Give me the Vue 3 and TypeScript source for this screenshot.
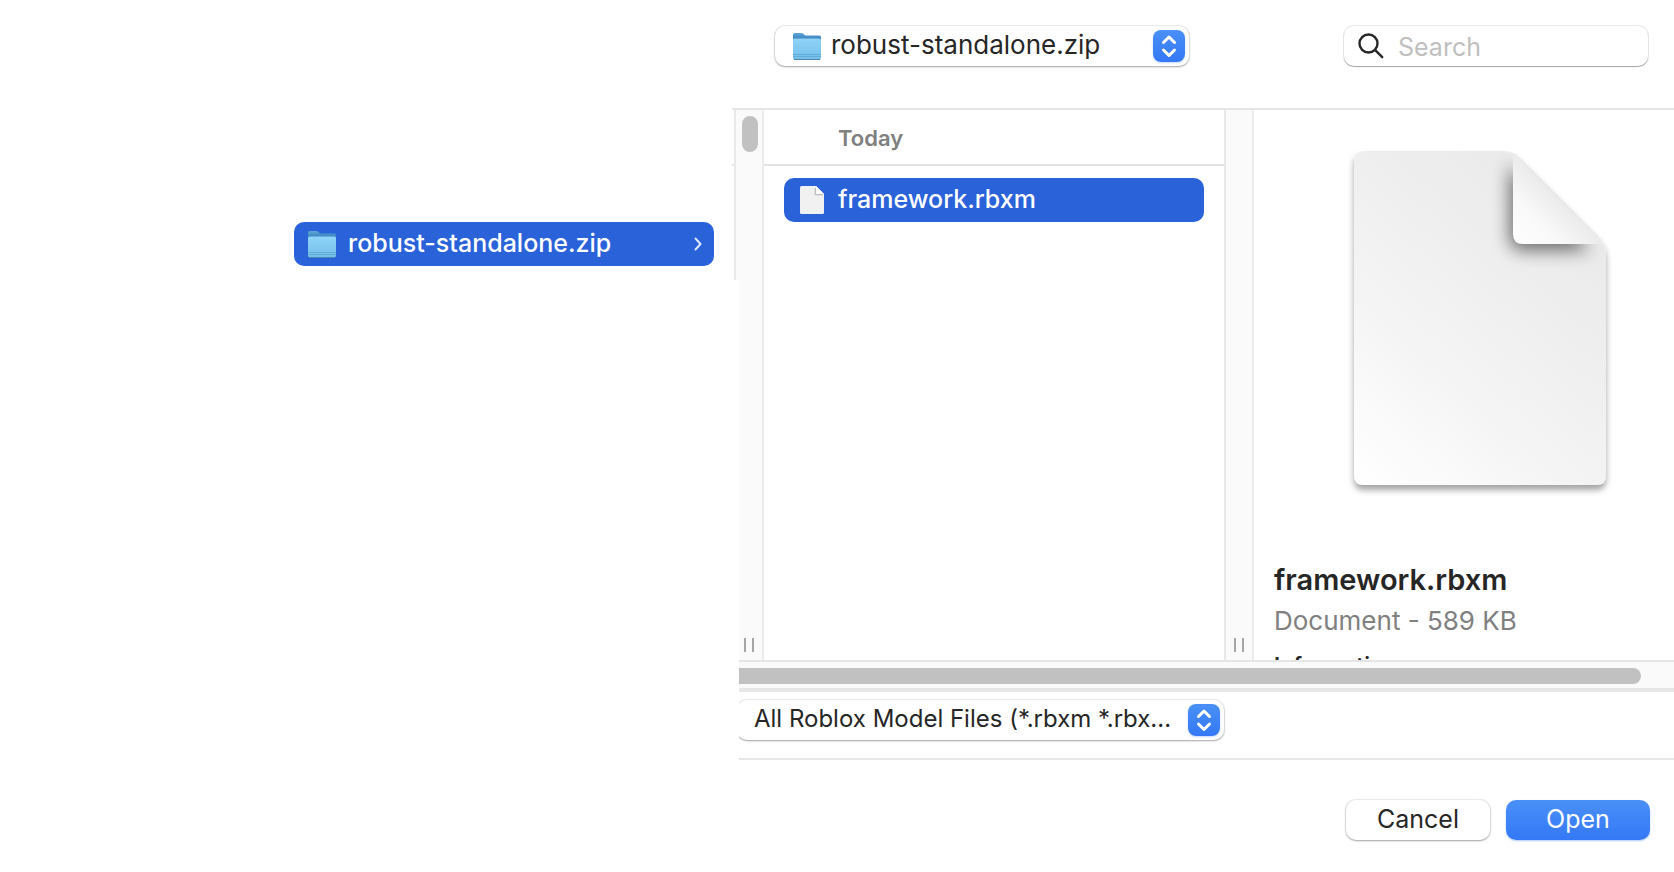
<script setup lang="ts">
import { ref } from 'vue'

interface FileEntry {
  name: string
  kind: string
  size: string
}

const folder = ref('robust-standalone.zip')
const query = ref('')
const filter = ref('All Roblox Model Files (*.rbxm *.rbx...')
const files: FileEntry[] = [{ name: 'framework.rbxm', kind: 'Document', size: '589 KB' }]
const selected = ref<FileEntry>(files[0])
</script>

<template>
  <main class="dialog">
    <svg class="defs" aria-hidden="true">
      <defs>
        <linearGradient id="folder-back" x1="0" y1="0" x2="0" y2="1">
          <stop offset="0" stop-color="#5fa6d6" />
          <stop offset="0.4" stop-color="#4a93ca" />
          <stop offset="1" stop-color="#3579b8" />
        </linearGradient>
        <linearGradient id="folder-front" x1="0" y1="0" x2="0" y2="1">
          <stop offset="0" stop-color="#8fd3f8" />
          <stop offset="1" stop-color="#74bfea" />
        </linearGradient>
        <symbol id="folder" viewBox="0 0 32 32">
          <path d="M2 4.500Q2 3 4 3h6.500q1 0 1.800.8l1 1q.7.7 1.700.7H28.500q1.500 0 1.500 1.500V11H2z" fill="url(#folder-back)" />
          <path d="M2 10Q2 8.500 3.500 8.500h25Q30 8.500 30 10v17.500q0 2-2 2H4q-2 0-2-2z" fill="url(#folder-front)" />
          <path d="M2 24.500h28M2 26.500h28" stroke="#62acd8" stroke-width="1" />
          <path d="M3 29.500h26" stroke="#4d87ad" stroke-width="1" />
        </symbol>
        <symbol id="stepper" viewBox="0 0 32 32">
          <path d="M10.500 12.500 16 7l5.500 5.500M10.500 20 16 25.500 21.500 20" fill="none" stroke="#fff" stroke-width="3" stroke-linecap="round" stroke-linejoin="round" />
        </symbol>
      </defs>
    </svg>

    <header class="toolbar">
      <div class="popup location">
        <svg class="folder" aria-hidden="true"><use href="#folder" /></svg>
        <select v-model="folder" aria-label="Location">
          <option>robust-standalone.zip</option>
        </select>
        <svg class="stepper" aria-hidden="true"><use href="#stepper" /></svg>
      </div>
      <label class="search">
        <svg viewBox="0 0 28 28" aria-hidden="true">
          <circle cx="11.500" cy="11.500" r="9" />
          <path d="m18.200 18.200 7 7" />
        </svg>
        <input v-model="query" type="search" placeholder="Search" aria-label="Search" />
      </label>
    </header>

    <section class="browser">
      <div class="parent">
        <div class="stub"></div>
        <button class="row" type="button">
          <svg class="folder" aria-hidden="true"><use href="#folder" /></svg>
          <span>{{ folder }}</span>
          <svg class="chevron" viewBox="0 0 8 14" aria-hidden="true"><path d="m1.500 1.500 5 5.500-5 5.500" /></svg>
        </button>
      </div>

      <div class="splitter first">
        <div class="edge"></div>
        <div class="track">
          <div class="thumb"></div>
          <div class="grip"></div>
        </div>
      </div>

      <div class="files">
        <h2>Today</h2>
        <button v-for="file in files" :key="file.name" class="row" type="button" @click="selected = file">
          <svg class="doc" viewBox="0 0 28 32" aria-hidden="true">
            <path d="M2 3.500Q2 2 3.500 2H18l8 8v18.500q0 1.500-1.500 1.500h-21Q2 30 2 28.500z" fill="#f1f1f1" />
            <path d="M17.500 4v6.500H25" fill="none" stroke="#bdbdbd" stroke-width="1.500" />
            <path d="M18 2v7q0 1 1 1h7z" fill="#fff" />
          </svg>
          <span>{{ file.name }}</span>
        </button>
      </div>

      <div class="splitter">
        <div class="track">
          <div class="grip"></div>
        </div>
      </div>

      <article class="preview">
        <svg class="page" viewBox="0 0 272 364" aria-hidden="true">
          <defs>
            <linearGradient id="sheet" gradientUnits="userSpaceOnUse" x1="10" y1="344" x2="230" y2="100">
              <stop offset="0" stop-color="#fff" />
              <stop offset="0.500" stop-color="#f3f3f3" />
              <stop offset="1" stop-color="#ebebeb" />
            </linearGradient>
            <linearGradient id="curl" gradientUnits="userSpaceOnUse" x1="170" y1="103" x2="216" y2="57">
              <stop offset="0" stop-color="#fff" />
              <stop offset="0.500" stop-color="#f9f9f9" />
              <stop offset="1" stop-color="#eaeaea" />
            </linearGradient>
            <filter id="lift" x="-10%" y="-10%" width="120%" height="120%">
              <feDropShadow dx="0" dy="5" stdDeviation="3" flood-color="#000" flood-opacity="0.360" />
            </filter>
            <filter id="soft" x="-40%" y="-40%" width="180%" height="180%">
              <feGaussianBlur stdDeviation="9" />
            </filter>
            <clipPath id="outline">
              <path d="M10 20Q10 10 20 10H160Q169 10 176 17L254 95Q262 103 262 114V334Q262 344 252 344H20Q10 344 10 334Z" />
            </clipPath>
          </defs>
          <path d="M10 20Q10 10 20 10H160Q169 10 176 17L254 95Q262 103 262 114V334Q262 344 252 344H20Q10 344 10 334Z" fill="url(#sheet)" filter="url(#lift)" />
          <g clip-path="url(#outline)">
            <path d="M166 24V97Q166 109 178 109H246L226 84Z" fill="#000" opacity="0.560" filter="url(#soft)" />
          </g>
          <path d="M169 12Q173 14 176 17L254 95Q258 99 259.500 103H179Q169 103 169 93Z" fill="url(#curl)" />
        </svg>
        <h1>{{ selected.name }}</h1>
        <p>{{ selected.kind }} - {{ selected.size }}</p>
        <h3>Information</h3>
      </article>
    </section>

    <div class="scroller"><div class="bar"></div></div>

    <section class="filter">
      <div class="popup types">
        <select v-model="filter" aria-label="File type">
          <option>All Roblox Model Files (*.rbxm *.rbx...</option>
        </select>
        <svg class="stepper" aria-hidden="true"><use href="#stepper" /></svg>
      </div>
    </section>

    <footer class="actions">
      <button type="button">Cancel</button>
      <button type="button" class="primary">Open</button>
    </footer>
  </main>
</template>

<style>
body {
  margin: 0;
  background: #fff;
}
</style>

<style scoped>
* {
  box-sizing: border-box;
}

.dialog {
  display: flex;
  flex-direction: column;
  height: 100vh;
  overflow: hidden;
  background: #fff;
  color: #262626;
  font-family: Inter, "Liberation Sans", sans-serif;
  font-size: 25px;
  line-height: 32px;
}

.defs {
  position: absolute;
  width: 0;
  height: 0;
}

button,
input,
select {
  font: inherit;
  color: inherit;
  border: 0;
  margin: 0;
  padding: 0;
  background: none;
  outline: 0;
}

.toolbar {
  display: flex;
  flex: none;
  justify-content: space-between;
  height: 110px;
  margin-left: 732px;
  padding: 26px 26px 0 43px;
  border-bottom: 2px solid #e5e5e5;
}

.popup {
  display: flex;
  align-items: center;
  height: 40px;
  padding: 0 4px;
  border-radius: 10px;
  background: #fff;
  box-shadow: 0 0 1px 1px rgba(0, 0, 0, 0.08), 0 1px 2px rgba(0, 0, 0, 0.3);
}

.popup select {
  flex: 1;
  min-width: 0;
  height: 34px;
  padding-bottom: 2px;
  line-height: 32px;
  appearance: none;
}

.location {
  width: 414px;
  padding-left: 16px;
}

.location select {
  padding-left: 8px;
  font-size: 26px;
}

.folder {
  flex: none;
  width: 32px;
  height: 32px;
}

.stepper {
  flex: none;
  width: 32px;
  height: 32px;
  border-radius: 8px;
  background: linear-gradient(#4a90f7, #3478f6);
  box-shadow: 0 1px 2px rgba(52, 120, 246, 0.3);
}

.search {
  display: flex;
  align-items: center;
  gap: 13px;
  width: 304px;
  height: 40px;
  padding-left: 13px;
  border-radius: 10px;
  box-shadow: 0 0 0 1px rgba(0, 0, 0, 0.08), 0 1px 1px rgba(0, 0, 0, 0.3);
}

.search svg {
  flex: none;
  width: 28px;
  height: 28px;
  fill: none;
  stroke: #262626;
  stroke-width: 2.4;
  stroke-linecap: round;
}

.search input {
  flex: 1;
  min-width: 0;
  padding-top: 2px;
  appearance: none;
}

.search input::placeholder {
  color: #bfbfbf;
  opacity: 1;
}

.browser {
  display: flex;
  flex: 1;
  min-height: 0;
  overflow: hidden;
}

.parent {
  flex: none;
  width: 734px;
  padding-right: 20px;
}

.stub {
  height: 56px;
  margin: 0 -20px 56px 732px;
  border-bottom: 2px solid #e5e5e5;
}

.row {
  display: flex;
  align-items: center;
  gap: 10px;
  width: 420px;
  height: 44px;
  padding: 0 12px;
  border-radius: 10px;
  background: #2962d9;
  color: #fff;
  font-weight: 500;
  text-align: left;
}

.row span {
  flex: 1;
  padding-bottom: 2px;
}

.parent .row {
  margin-left: auto;
}

.chevron {
  flex: none;
  width: 8px;
  height: 14px;
  fill: none;
  stroke: #dfe8fb;
  stroke-width: 2;
  stroke-linecap: round;
  stroke-linejoin: round;
}

.splitter {
  display: flex;
  flex: none;
  width: 30px;
  border-left: 2px solid #e8e8e8;
}

.splitter.first {
  border-left: 0;
}

.edge {
  flex: none;
  width: 5px;
  height: 170px;
  border-left: 2px solid #e8e8e8;
  background: #fafafa;
}

.track {
  display: flex;
  flex: 1;
  flex-direction: column;
  align-items: center;
  padding: 6px 0 8px;
  border-right: 2px solid #ebebeb;
  background: #fafafa;
}

.thumb {
  width: 16px;
  height: 36px;
  border-radius: 8px;
  background: #c1c1c1;
}

.grip {
  width: 10px;
  height: 14px;
  margin-top: auto;
  border: solid #a6a6a6;
  border-width: 0 2px;
}

.first .track {
  align-items: flex-start;
  padding-left: 3px;
}

.first .grip {
  margin-left: 2px;
}

.files {
  flex: none;
  width: 460px;
}

h1,
h2,
h3,
p {
  margin: 0;
}

h2 {
  height: 56px;
  margin-bottom: 12px;
  padding: 12px 0 0 74px;
  border-bottom: 2px solid #e2e2e2;
  color: #808080;
  font-size: 22px;
  font-weight: 600;
}

.files .row {
  gap: 12px;
  margin-left: 20px;
  padding-left: 14px;
}

.doc {
  flex: none;
  width: 28px;
  height: 32px;
}

.preview {
  flex: 1;
  min-width: 0;
  padding: 31px 0 0 20px;
  overflow: hidden;
}

.page {
  display: block;
  width: 272px;
  height: 364px;
  margin: 0 0 57px 70px;
}

h1 {
  margin-bottom: 7px;
  font-size: 29px;
  font-weight: 600;
  line-height: 36px;
}

p {
  margin-bottom: 12px;
  color: #808080;
  font-size: 26px;
}

h3 {
  font-size: 22px;
  font-weight: 600;
}

.scroller {
  flex: none;
  height: 32px;
  margin-left: 739px;
  padding: 6px 33px 0 0;
  border-top: 2px solid #e5e5e5;
  border-bottom: 4px solid #e7e7e7;
  background: #fafafa;
}

.bar {
  height: 16px;
  border-radius: 0 8px 8px 0;
  background: #c1c1c1;
}

.filter {
  flex: none;
  height: 68px;
  margin-left: 739px;
  padding-top: 8px;
  overflow: hidden;
  border-bottom: 2px solid #e5e5e5;
}

.types {
  width: 487px;
  margin-left: -2px;
  padding-left: 17px;
}

.types select {
  font-size: 24px;
}

.actions {
  display: flex;
  flex: none;
  gap: 16px;
  justify-content: flex-end;
  height: 112px;
  padding: 40px 24px 32px;
}

.actions button {
  width: 144px;
  height: 40px;
  padding-bottom: 2px;
  border-radius: 10px;
  background: #fff;
  box-shadow: 0 0 1px 1px rgba(0, 0, 0, 0.08), 0 1px 2px rgba(0, 0, 0, 0.3);
}

.actions .primary {
  background: linear-gradient(#4a90f7, #3478f6);
  box-shadow: 0 1px 2px rgba(52, 120, 246, 0.4);
  color: #fff;
}
</style>
